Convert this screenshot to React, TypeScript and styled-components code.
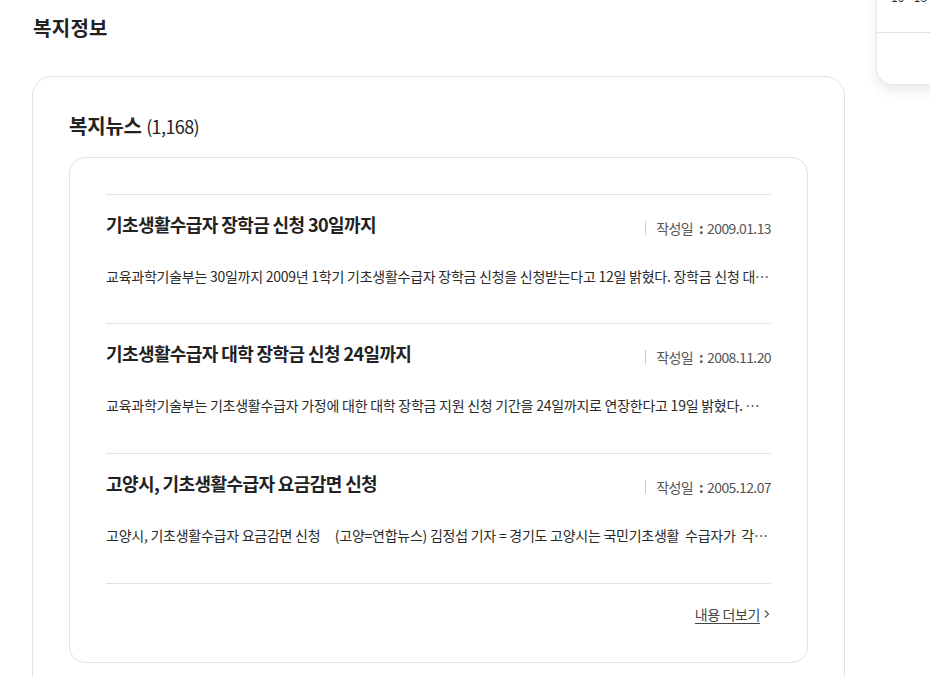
import React from 'react';
import styled, { createGlobalStyle } from 'styled-components';

interface NewsItem {
  title: string;
  date: string;
  summary: string;
}

const news: NewsItem[] = [
  {
    title: '기초생활수급자 장학금 신청 30일까지',
    date: '2009.01.13',
    summary:
      '교육과학기술부는 30일까지 2009년 1학기 기초생활수급자 장학금 신청을 신청받는다고 12일 밝혔다. 장학금 신청 대상은 기초생활수급자 가정의 대학생이다.',
  },
  {
    title: '기초생활수급자 대학 장학금 신청 24일까지',
    date: '2008.11.20',
    summary:
      '교육과학기술부는 기초생활수급자 가정에 대한 대학 장학금 지원 신청 기간을 24일까지로 연장한다고 19일 밝혔다. 지원 대상은',
  },
  {
    title: '고양시, 기초생활수급자 요금감면 신청',
    date: '2005.12.07',
    summary:
      '고양시, 기초생활수급자 요금감면 신청 \u00a0\u00a0\u00a0 (고양=연합뉴스) 김정섭 기자 = 경기도 고양시는 국민기초생활 \u00a0수급자가 \u00a0각종 요금',
  },
];

const App = () => {
  return (
    <>
      <GlobalStyle />
      <Page>
        <Main>
          <PageTitle>복지정보</PageTitle>
          <Section>
            <SectionTitle>
              복지뉴스 <Count>(1,168)</Count>
            </SectionTitle>
            <NewsCard>
              <NewsList>
                {news.map((item) => (
                  <NewsRow key={item.date}>
                    <RowHead>
                      <NewsTitle>{item.title}</NewsTitle>
                      <DateLabel>
                        작성일 <Colon>:</Colon>
                        {item.date}
                      </DateLabel>
                    </RowHead>
                    <Summary>{item.summary}</Summary>
                  </NewsRow>
                ))}
              </NewsList>
              <MoreRow>
                <MoreLink href="#">내용 더보기</MoreLink>
                <Chevron width="8" height="10" viewBox="0 0 8 10">
                  <path d="M2 1.5 L5.5 5 L2 8.5" fill="none" stroke="#555" strokeWidth="1.2" />
                </Chevron>
              </MoreRow>
            </NewsCard>
          </Section>
        </Main>
        <SideWidget>
          <WidgetTop>
            <WidgetText>10 - 13</WidgetText>
          </WidgetTop>
          <WidgetBottom />
        </SideWidget>
      </Page>
    </>
  );
};

export default App;

const GlobalStyle = createGlobalStyle`
  body {
    margin: 0;
    background: #fff;
    color: #222;
    font-family: "Noto Sans CJK KR", "Noto Sans", sans-serif;
  }
`;

const Page = styled.div`
  display: flex;
  align-items: flex-start;
  width: 930px;
  height: 676px;
  overflow: hidden;
`;
const Main = styled.div`
  width: 813px;
  padding-left: 32px;
  flex-shrink: 0;
`;
const PageTitle = styled.h1`
  margin: 12px 0 0 1px;
  font-size: 20px;
  font-weight: 700;
  line-height: 32px;
  letter-spacing: 0.3px;
  color: #222;
`;
const Section = styled.section`
  margin-top: 32px;
  border: 1px solid #e2e2e2;
  border-radius: 20px;
  padding: 35px 36px 40px;
  height: 700px;
`;
const SectionTitle = styled.h2`
  margin: 0;
  font-size: 20px;
  font-weight: 700;
  line-height: 28px;
  letter-spacing: -0.2px;
  color: #222;
`;
const Count = styled.span`
  font-size: 18px;
  font-weight: 400;
  letter-spacing: -0.6px;
`;
const NewsCard = styled.div`
  margin-top: 17px;
  border: 1px solid #e2e2e2;
  border-radius: 16px;
  padding: 36px 36px 38px;
`;
const NewsList = styled.ul`
  list-style: none;
  margin: 0;
  padding: 0;
  border-bottom: 1px solid #e2e2e2;
`;
const NewsRow = styled.li`
  border-top: 1px solid #e2e2e2;
  padding: 15px 0 0;
  height: 114px;
  &:first-child {
    height: 113px;
  }
`;
const RowHead = styled.div`
  display: flex;
  align-items: center;
  justify-content: space-between;
`;
const NewsTitle = styled.h3`
  margin: 0;
  font-size: 18px;
  font-weight: 700;
  line-height: 28px;
  letter-spacing: -0.6px;
  color: #222;
`;
const DateLabel = styled.span`
  display: flex;
  align-items: center;
  font-size: 14px;
  color: #555;
  letter-spacing: -0.6px;
  margin-top: 8px;
  &::before {
    content: '';
    width: 1px;
    height: 14px;
    background: #ccc;
    margin-right: 10px;
  }
`;
const Colon = styled.span`
  margin: 0 4px 0 6px;
  font-weight: 700;
`;
const Summary = styled.p`
  margin: 28px 0 0;
  font-size: 14px;
  line-height: 20px;
  color: #2a2a2a;
  letter-spacing: -0.25px;
  white-space: nowrap;
  overflow: hidden;
  text-overflow: ellipsis;
`;
const MoreRow = styled.div`
  display: flex;
  justify-content: flex-end;
  align-items: center;
  gap: 3px;
  margin-top: 20px;
`;
const MoreLink = styled.a`
  font-size: 14px;
  color: #444;
  letter-spacing: -0.4px;
  text-decoration: underline;
  text-underline-offset: 3px;
`;
const Chevron = styled.svg`
  display: block;
`;
const SideWidget = styled.aside`
  margin-left: 31px;
  margin-top: -40px;
  width: 120px;
  flex-shrink: 0;
  background: #fff;
  border: 1px solid #e6e6e6;
  border-radius: 16px;
  box-shadow: 0 6px 12px rgba(0, 0, 0, 0.08);
`;
const WidgetTop = styled.div`
  height: 72px;
  border-bottom: 1px solid #e2e2e2;
  display: flex;
  align-items: flex-end;
  padding: 0 0 30px 14px;
  box-sizing: border-box;
`;
const WidgetText = styled.span`
  font-size: 12px;
  color: #333;
  line-height: 10px;
`;
const WidgetBottom = styled.div`
  height: 51px;
`;
